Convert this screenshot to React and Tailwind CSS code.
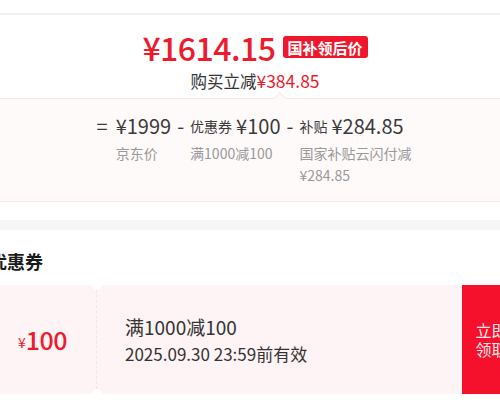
import React from 'react';

const font = "font-['Noto_Sans_CJK_SC',sans-serif]";

const PriceHeader = () => (
  <div className="border-t-2 border-[#f4eff1]">
    <div className="mt-[16px] flex h-[32px] items-center justify-center">
      <span className="text-[32px] leading-none font-medium text-[#ec1b2e] tracking-[-0.5px]">¥1614.15</span>
      <span className="ml-[7px] flex h-[22px] items-center rounded-[3px] bg-[#f0172c] px-[5px] text-[15px] font-bold leading-none text-white">
        国补领后价
      </span>
    </div>
    <div className="mt-[8px] flex h-[20px] items-center justify-center text-[16.5px] leading-none">
      <span className="text-[#333]">购买立减</span>
      <span className="text-[17.5px] text-[#ec1b2e]">¥384.85</span>
    </div>
  </div>
);

const Breakdown = () => (
  <div className="relative mx-4 mt-[7px] h-[104px] border border-[#f7e8ea] bg-[#fffafa]">
    <div className="absolute left-[286px] top-[-5px] h-[8px] w-[8px] rotate-45 border-l border-t border-[#f7e8ea] bg-[#fffafa]" />
    <div className="flex justify-center pt-[15px] text-[#3a3a3a]">
      <div className="flex h-[24px] items-center pr-[8px] text-[20px] leading-none">=</div>
      <div className="flex flex-col">
        <div className="flex h-[24px] items-center text-[20px] leading-none">¥1999</div>
        <div className="mt-[4px] text-[14px] leading-[22px] text-[#999]">京东价</div>
      </div>
      <div className="flex h-[24px] items-center px-[6px] text-[20px] leading-none">-</div>
      <div className="flex flex-col">
        <div className="flex h-[24px] items-center leading-none">
          <span className="text-[14px]">优惠券</span>
          <span className="ml-[4px] text-[20px]">¥100</span>
        </div>
        <div className="mt-[4px] text-[14px] leading-[22px] text-[#999]">满1000减100</div>
      </div>
      <div className="flex h-[24px] items-center px-[6px] text-[20px] leading-none">-</div>
      <div className="flex flex-col">
        <div className="flex h-[24px] items-center leading-none">
          <span className="text-[14px]">补贴</span>
          <span className="ml-[4px] text-[20px]">¥284.85</span>
        </div>
        <div className="mt-[4px] w-[114px] text-[14px] leading-[22px] text-[#999]">国家补贴云闪付减¥284.85</div>
      </div>
    </div>
  </div>
);

const CouponCard = () => (
  <div className="relative mx-4 mt-[12px] flex h-[109px] bg-[#fff4f5]">
    <div className="flex w-[108px] items-center justify-center border-r border-dashed border-[#f7e2e5] text-[#ec1b2e]">
      <span className="mt-[5px] text-[14px] leading-none">¥</span>
      <span className="text-[25px] font-medium leading-none tracking-[-0.5px]">100</span>
    </div>
    <div className="absolute left-[103px] top-[-5px] h-[10px] w-[10px] rounded-full bg-white" />
    <div className="absolute bottom-[-5px] left-[103px] h-[10px] w-[10px] rounded-full bg-white" />
    <div className="flex flex-1 flex-col justify-center pl-[28px] text-[#333]">
      <div className="text-[19px] leading-[24px]">满1000减100</div>
      <div className="mt-[4px] text-[17px] leading-[22px]">2025.09.30 23:59前有效</div>
    </div>
    <div className="flex w-[59px] flex-col items-center justify-center bg-[#f5102b] text-[16px] leading-[19px] text-[#ffe8ea]">
      <span>立即</span>
      <span>领取</span>
    </div>
  </div>
);

export default function App() {
  return (
    <div className={`h-[406px] w-[500px] overflow-hidden bg-white ${font}`}>
      <div className="-ml-[27px] w-[564px]">
        <div className="h-[13px]" />
        <PriceHeader />
        <Breakdown />
        <div className="mt-[18px] h-[10px] bg-[#f6f6f9]" />
        <div className="mt-[19px] flex h-[24px] items-center px-4 text-[18px] font-bold leading-none text-[#1a1a1a]">
          优惠券
        </div>
        <CouponCard />
      </div>
    </div>
  );
}
